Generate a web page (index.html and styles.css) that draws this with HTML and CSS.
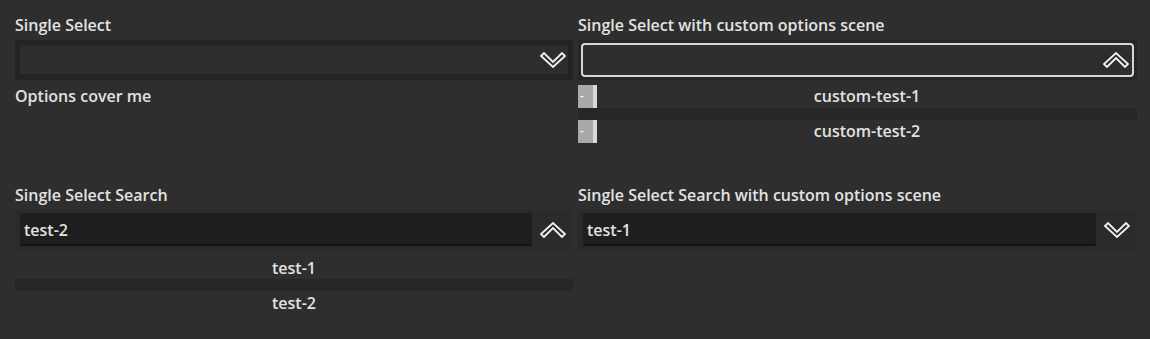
FILE: index.html
```html
<!DOCTYPE html>
<html>
<head>
    <title>Select demo</title>
    <link rel="stylesheet" href="styles.css">
</head>
<body>
    <div class="grid">
        <div class="cell">
            <div class="label">Single Select</div>
            <div class="select">
                <div class="select-face"></div>
                <svg class="chevron" viewBox="0 0 26 16"><polygon points="1,4 4,1 13,10 22,1 25,4 13,15"/></svg>
            </div>
            <div class="label cover">Options cover me</div>
        </div>

        <div class="cell">
            <div class="label">Single Select with custom options scene</div>
            <div class="select open">
                <div class="select-face focus">
                    <svg class="chevron" viewBox="0 0 26 16"><polygon points="1,12 4,15 13,6 22,15 25,12 13,1"/></svg>
                </div>
                <div class="dropdown">
                    <div class="option custom">
                        <span class="swatch">-</span>
                        <span class="option-text">custom-test-1</span>
                    </div>
                    <div class="sep"></div>
                    <div class="option custom">
                        <span class="swatch">-</span>
                        <span class="option-text">custom-test-2</span>
                    </div>
                </div>
            </div>
        </div>

        <div class="cell">
            <div class="label">Single Select Search</div>
            <div class="search-wrap">
                <div class="search">
                    <div class="search-field">test-2</div>
                    <div class="search-btn">
                        <svg class="chevron" viewBox="0 0 26 16"><polygon points="1,12 4,15 13,6 22,15 25,12 13,1"/></svg>
                    </div>
                </div>
                <div class="dropdown">
                    <div class="option"><span class="option-text">test-1</span></div>
                    <div class="sep"></div>
                    <div class="option"><span class="option-text">test-2</span></div>
                </div>
            </div>
        </div>

        <div class="cell">
            <div class="label">Single Select Search with custom options scene</div>
            <div class="search-wrap">
                <div class="search">
                    <div class="search-field">test-1</div>
                    <div class="search-btn">
                        <svg class="chevron" viewBox="0 0 26 16"><polygon points="1,4 4,1 13,10 22,1 25,4 13,15"/></svg>
                    </div>
                </div>
            </div>
        </div>
    </div>
</body>
</html>
```

FILE: styles.css
```css
html, body {
    min-height: 100vh;
}
body {
    margin: 0;
    background-color: #2e2e2e;
    color: #e2e2e2;
    font-family: "Open Sans", "Noto Sans", sans-serif;
    font-weight: 600;
    font-size: 16px;
}
.grid {
    display: grid;
    grid-template-columns: 558px 559px;
    column-gap: 5px;
    row-gap: 77px;
    padding: 14px 13px 0 15px;
}
.label {
    line-height: 22px;
    height: 22px;
    margin-bottom: 4px;
}
.cover {
    margin-top: 5px;
    margin-bottom: 0;
}
.select {
    position: relative;
    height: 40px;
    box-sizing: border-box;
    background-color: #242424;
    padding: 5px 5px 6px 5px;
}
.select-face {
    height: 100%;
    background-color: #2d2d2d;
    box-sizing: border-box;
}
.select > .chevron {
    position: absolute;
    right: 7px;
    top: 12px;
}
.select.open {
    background-color: #262626;
    padding: 3px;
}
.select-face.focus {
    border: 2px solid #d6d6d6;
    border-radius: 4px;
    display: flex;
    justify-content: flex-end;
    align-items: center;
    padding-right: 3px;
}
.chevron {
    width: 26px;
    height: 16px;
    display: block;
}
.chevron polygon {
    fill: none;
    stroke: #f4f4f4;
    stroke-width: 1.8;
    stroke-linejoin: miter;
}
.search-wrap {
    position: relative;
}
.search {
    display: flex;
    height: 40px;
    box-sizing: border-box;
    background-color: #2a2a2a;
}
.search-field {
    flex: 1;
    margin: 3px 1px 4px 5px;
    background-color: #1e1e1e;
    border-bottom: 2px solid #121212;
    border-radius: 2px;
    padding: 4px 0 0 4px;
    line-height: 27px;
}
.search-btn {
    width: 40px;
    display: flex;
    align-items: center;
    justify-content: center;
    background-color: #2b2b2b;
}
.dropdown {
    position: absolute;
    left: 0;
    right: 0;
    top: calc(100% + 5px);
}
.search-wrap .dropdown {
    top: calc(100% + 6px);
}
.option {
    height: 23px;
    display: flex;
    align-items: center;
    justify-content: center;
}
.option.custom {
    justify-content: flex-start;
    align-items: stretch;
}
.option.custom .option-text {
    flex: 1;
    text-align: center;
    line-height: 23px;
}
.sep {
    height: 12px;
    background-color: #262626;
}
.swatch {
    width: 13px;
    background-color: #a9a9a9;
    border-right: 4px solid #d8d8d8;
    color: #ffffff;
    font-size: 11px;
    line-height: 21px;
    padding-left: 2px;
}
```
